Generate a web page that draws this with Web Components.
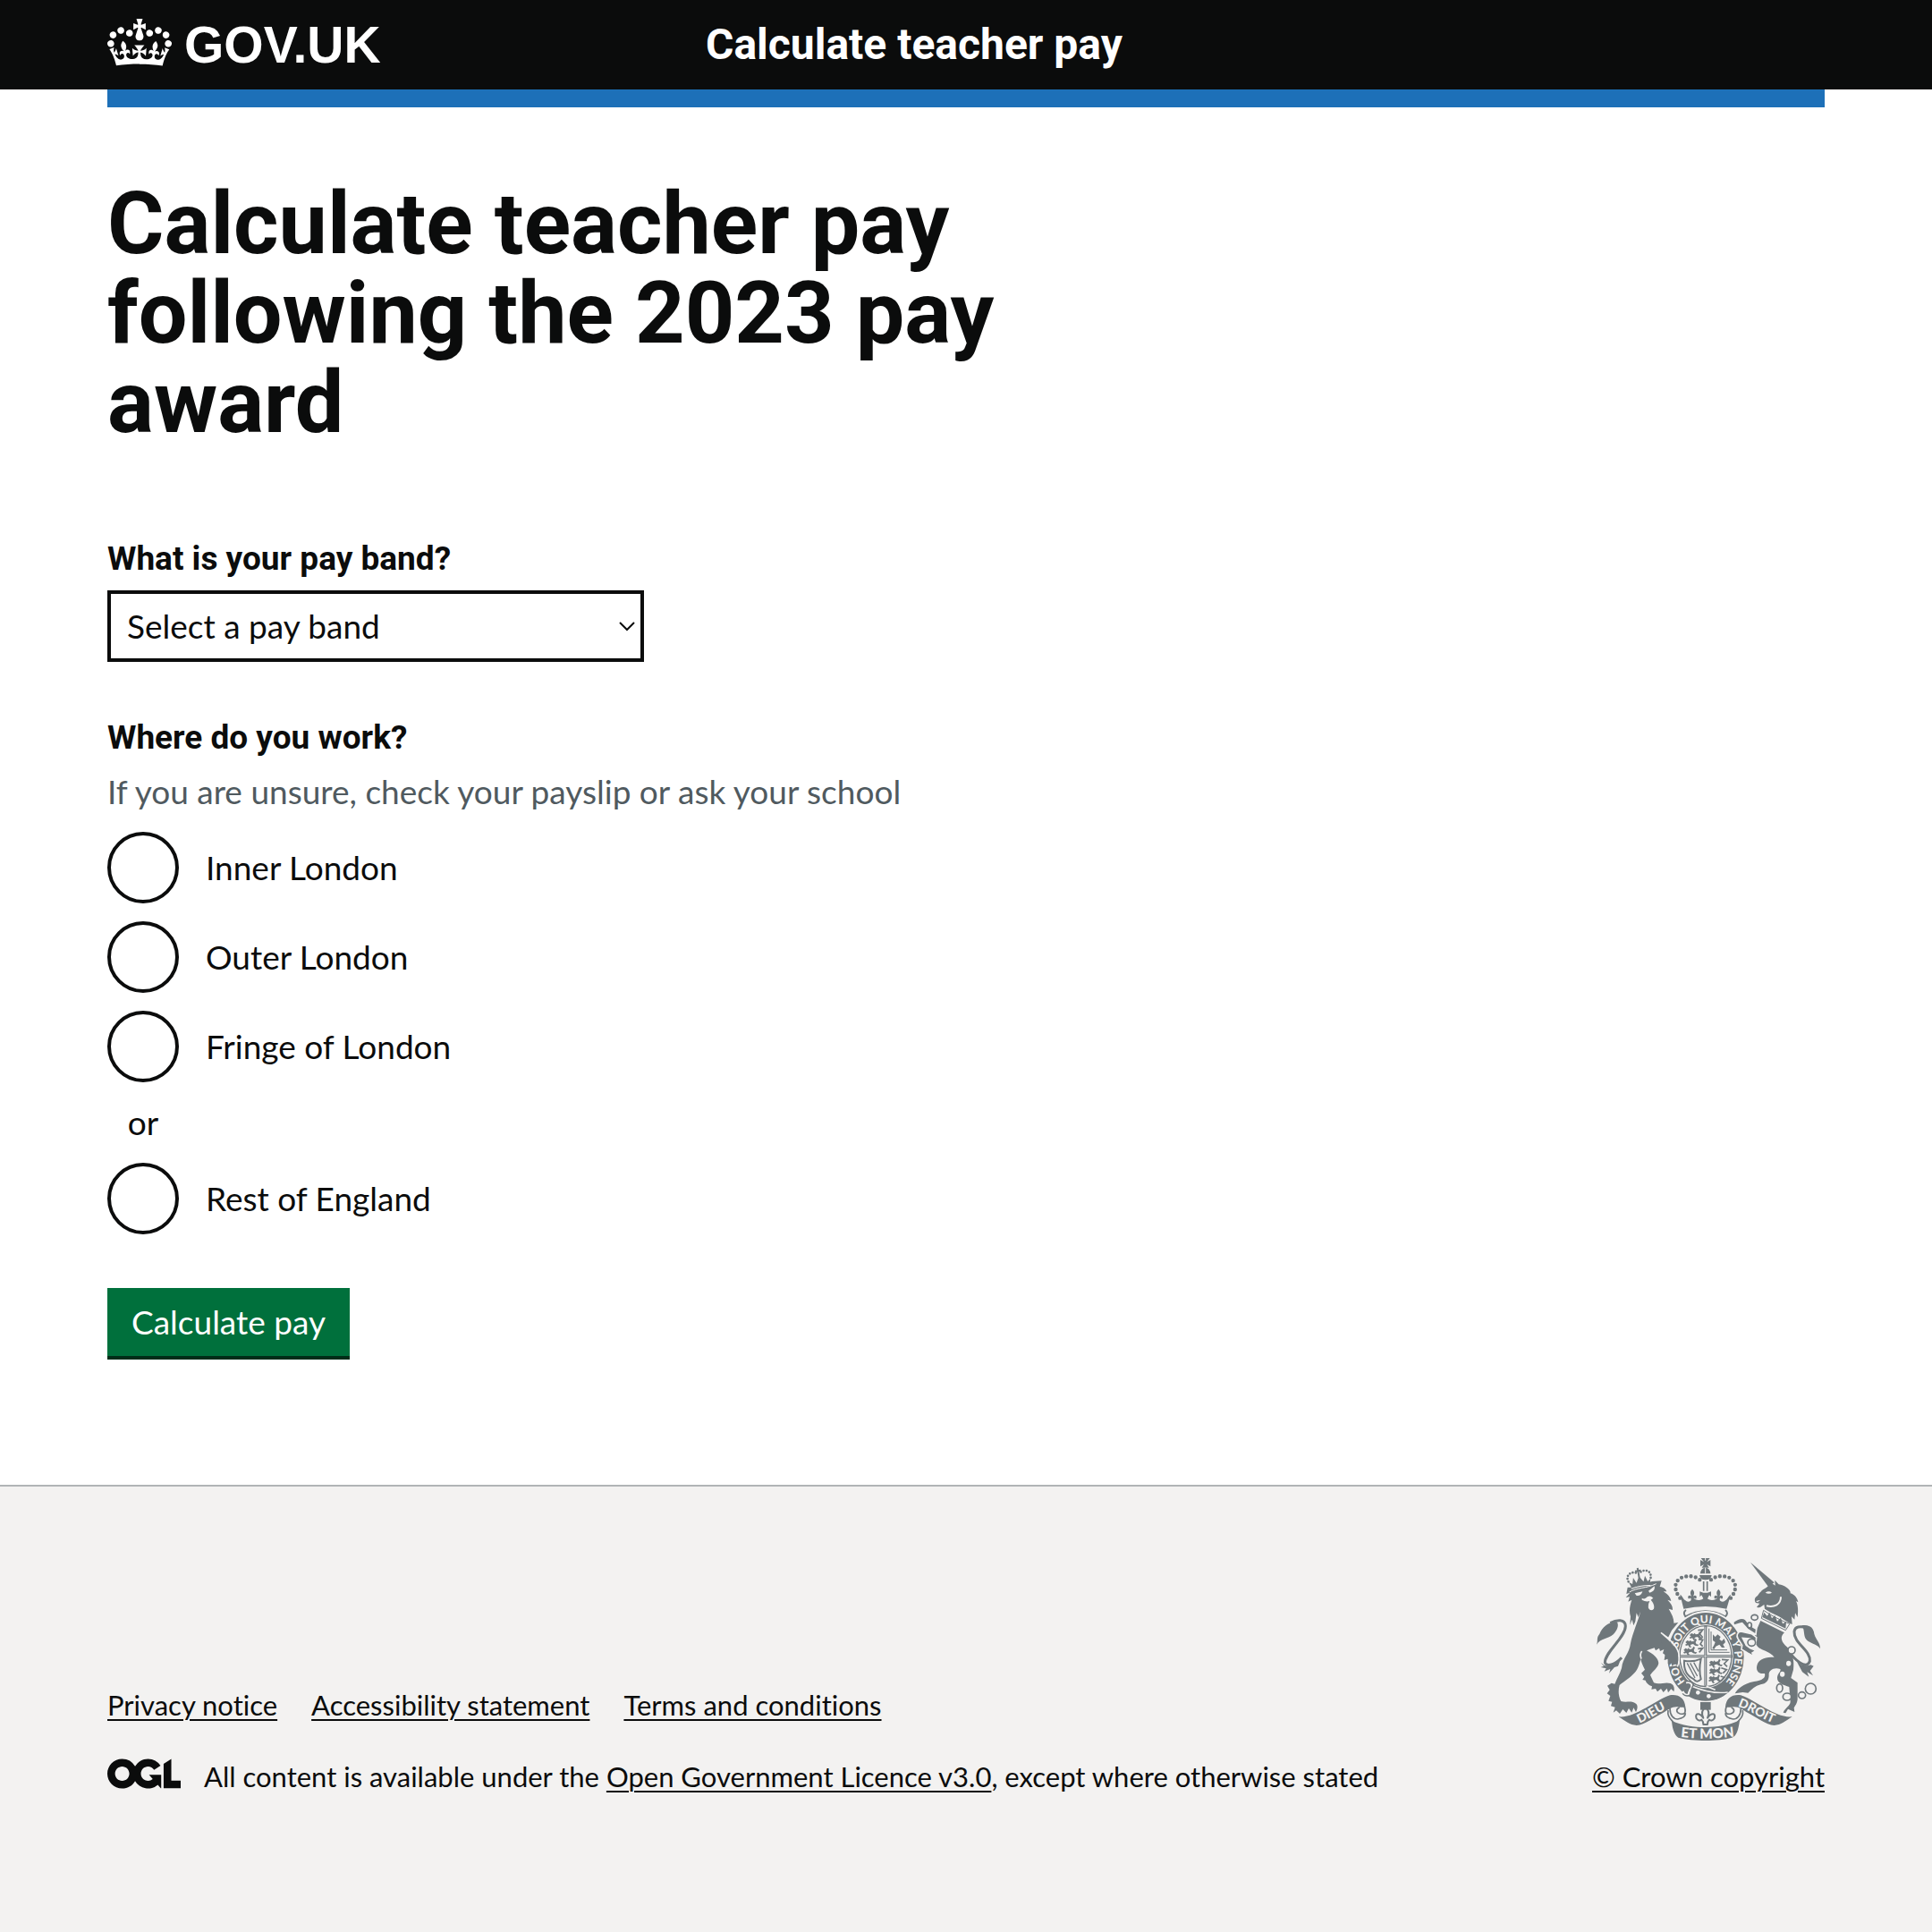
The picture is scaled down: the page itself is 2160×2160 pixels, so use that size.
<!DOCTYPE html>
<html lang="en">
<head>
<meta charset="utf-8">
<meta name="viewport" content="width=device-width, initial-scale=1">
<title>Calculate teacher pay</title>
<style>
  body {
    margin: 0;
    min-height: 100vh;
    display: flex;
    flex-direction: column;
    font: 400 37px/50px Lato, "Liberation Sans", sans-serif;
    font-variant-ligatures: none;
    color: #0b0c0c;
    background: #fff;
    --gutter: 120px;
    --ink: #0b0c0c;
    --strong: Roboto, "Liberation Sans", sans-serif;
  }
</style>
</head>
<body>

<template id="tpl-header">
  <style>
    :host { display: block; color: #fff; }
    .top { background: #0b0c0c; }
    .row { display: flex; align-items: center; height: 100px; margin: 0 var(--gutter); }
    .home { flex: 0 0 calc(100% / 3); display: flex; align-items: center; gap: 14px; color: inherit; text-decoration: none; font: 700 57px/64px "Liberation Sans", sans-serif; }
    .home svg { width: 72px; height: 53px; margin-bottom: 5px; }
    .service { padding-left: 29px; color: inherit; text-decoration: none; font: 700 48px/60px var(--strong); }
    .bar { height: 20px; margin: 0 var(--gutter); background: #1d70b8; }
  </style>
  <header>
    <div class="top">
      <div class="row">
        <a class="home" href="#">
          <svg viewBox="0 0 132 97" aria-hidden="true"><path fill="currentColor" fill-rule="evenodd" d="M25 30.2c3.5 1.5 7.7-.2 9.1-3.7 1.5-3.6-.2-7.8-3.9-9.2-3.6-1.4-7.6.3-9.1 3.9-1.4 3.5.3 7.5 3.9 9zM9 39.5c3.6 1.5 7.8-.2 9.2-3.7 1.5-3.6-.2-7.8-3.9-9.1-3.6-1.5-7.6.2-9.1 3.8-1.4 3.5.3 7.5 3.8 9zM4.4 57.2c3.5 1.5 7.7-.2 9.1-3.8 1.5-3.6-.2-7.7-3.9-9.1-3.5-1.5-7.6.3-9.1 3.8-1.4 3.5.3 7.6 3.9 9.1zm38.3-21.4c3.5 1.5 7.7-.2 9.1-3.8 1.5-3.6-.2-7.7-3.9-9.1-3.6-1.5-7.6.3-9.1 3.8-1.3 3.6.4 7.7 3.9 9.1zm64.4-5.6c-3.6 1.5-7.8-.2-9.1-3.7-1.5-3.6.2-7.8 3.8-9.2 3.6-1.4 7.7.3 9.2 3.9 1.3 3.5-.4 7.5-3.9 9zm15.9 9.3c-3.6 1.5-7.7-.2-9.1-3.7-1.5-3.6.2-7.8 3.7-9.1 3.6-1.5 7.7.2 9.2 3.8 1.5 3.5-.3 7.5-3.8 9zm4.7 17.7c-3.6 1.5-7.8-.2-9.2-3.8-1.5-3.6.2-7.7 3.9-9.1 3.6-1.5 7.7.3 9.2 3.8 1.3 3.5-.4 7.6-3.9 9.1zM89.3 35.8c-3.6 1.5-7.8-.2-9.2-3.8-1.4-3.6.2-7.7 3.9-9.1 3.6-1.5 7.7.3 9.2 3.8 1.4 3.6-.3 7.7-3.9 9.1zM69.7 17.7l8.9 4.7V9.3l-8.9 2.8c-.2-.3-.5-.6-.9-.9L72.4 0H59.6l3.5 11.2c-.3.3-.6.5-.9.9l-8.8-2.8v13.1l8.8-4.7c.3.3.6.7.9.9l-5 15.4v.1c-.2.8-.4 1.6-.4 2.4 0 4.1 3.1 7.5 7 8.1h.2c.3 0 .7.1 1 .1.4 0 .7 0 1-.1h.2c4-.6 7.1-4.1 7.1-8.1 0-.8-.1-1.7-.4-2.4V34l-5.1-15.4c.4-.2.7-.6 1-.9zM66 92.8c16.9 0 32.8 1.1 47.1 3.2 4-16.9 8.9-26.7 14-33.5l-9.6-3.4c1 4.9 1.1 7.2 0 10.2-1.5-1.4-3-4.3-4.2-8.7L108.6 76c2.8-2 5-3.2 7.5-3.3-4.4 9.4-10 11.9-13.6 11.2-4.3-.8-6.3-4.6-5.6-7.9 1-4.7 5.7-5.9 8-.5 4.3-8.7-3-11.4-7.6-8.8 7.1-7.2 7.9-13.5 2.1-21.1-8 6.1-8.1 12.3-4.5 20.8-4.7-5.4-12.1-2.5-9.5 6.2 3.4-5.2 7.9-2 7.2 3.1-.6 4.3-6.4 7.8-13.5 7.2-10.3-.9-10.9-8-11.2-13.8 2.5-.5 7.1 1.8 11 7.3L80.2 60c-4.1 4.4-8 5.3-12.3 5.4 1.4-4.4 8-11.6 8-11.6H55.5s6.4 7.2 7.9 11.6c-4.2-.1-8-1-12.3-5.4l1.4 16c3.9-5.5 8.5-7.7 10.9-7.3-.3 5.8-.9 12.8-11.1 13.8-7.2.6-12.9-2.9-13.5-7.2-.7-5 3.8-8.3 7.1-3.1 2.7-8.7-4.6-11.6-9.4-6.2 3.7-8.5 3.6-14.7-4.6-20.8-5.8 7.6-5 13.9 2.2 21.1-4.7-2.6-11.9.1-7.7 8.8 2.3-5.5 7.1-4.2 8.1.5.7 3.3-1.3 7.1-5.7 7.9-3.5.7-9-1.8-13.5-11.2 2.5.1 4.7 1.3 7.5 3.3l-4.7-15.4c-1.2 4.4-2.7 7.2-4.3 8.7-1.1-3-.9-5.3 0-10.2l-9.5 3.4c5 6.9 9.9 16.7 14 33.5 14.8-2.1 30.8-3.2 47.7-3.2z"/></svg>
          <span>GOV.UK</span>
        </a>
        <a class="service" href="#"><slot></slot></a>
      </div>
    </div>
    <div class="bar"></div>
  </header>
</template>

<template id="tpl-page">
  <style>
    :host { display: block; padding: 80px var(--gutter) 144px; }
    main { max-width: 1260px; }
    h1 { margin: 0 0 100px; font: 700 97px/100px var(--strong); }
    form { display: flex; flex-direction: column; align-items: flex-start; gap: 60px; }
  </style>
  <main>
    <h1><slot name="heading"></slot></h1>
    <form onsubmit="return false"><slot></slot></form>
  </main>
</template>

<template id="tpl-select">
  <style>
    :host { display: block; }
    label { display: block; margin-bottom: 10px; font-family: var(--strong); font-weight: 700; }
    .box { display: inline-grid; align-items: center; vertical-align: top; width: 600px; max-width: 100%; }
    select, svg { grid-area: 1 / 1; }
    select { appearance: none; box-sizing: border-box; width: 100%; height: 80px; margin: 0; padding: 0 50px 0 18px; border: 4px solid var(--ink); border-radius: 0; background: #fff; color: inherit; font: inherit; }
    svg { justify-self: end; width: 18px; height: 12px; margin-right: 10px; pointer-events: none; }
  </style>
  <label for="band"></label>
  <div class="box">
    <select id="band"></select>
    <svg viewBox="0 0 18 12" aria-hidden="true"><path d="M1 2l8 8 8-8" fill="none" stroke="#0b0c0c" stroke-width="2"/></svg>
  </div>
</template>

<template id="tpl-radios">
  <style>
    :host { display: block; }
    fieldset { margin: 0; padding: 0; border: 0; min-width: 0; }
    legend { padding: 0; margin-bottom: 10px; font-family: var(--strong); font-weight: 700; }
    .hint { color: #505a5f; margin-bottom: 20px; }
    .list { display: flex; flex-direction: column; gap: 20px; }
    .item { display: flex; align-items: center; }
    input { appearance: none; box-sizing: border-box; width: 80px; height: 80px; margin: 0; border: 4px solid var(--ink); border-radius: 50%; background: transparent; }
    input:checked { background: radial-gradient(circle, #0b0c0c 20px, transparent 21px); }
    label { padding: 0 30px; }
    .or { width: 80px; text-align: center; }
  </style>
  <fieldset aria-describedby="hint">
    <legend></legend>
    <div class="hint" id="hint"></div>
    <div class="list"></div>
  </fieldset>
</template>

<template id="tpl-button">
  <style>
    :host { display: block; }
    button { height: 76px; margin: 0; padding: 0 27px; border: 0; border-radius: 0; background: #00703c; box-shadow: 0 4px 0 #002d18; color: #fff; font: inherit; }
  </style>
  <button type="submit"><slot></slot></button>
</template>

<template id="tpl-footer">
  <style>
    :host { display: block; flex: 1 0 auto; padding: 80px var(--gutter); border-top: 2px solid #b1b4b6; background: #f3f2f1; font-size: 31px; line-height: 40px; }
    footer { display: flex; align-items: flex-end; justify-content: space-between; gap: 40px; }
    a { color: inherit; text-decoration: underline; text-decoration-thickness: 2px; text-underline-offset: 4px; }
    ul { display: flex; flex-wrap: wrap; gap: 0 38px; margin: 0 0 40px; padding: 0; list-style: none; }
    .licence { display: flex; align-items: flex-start; gap: 26px; }
    .licence svg { width: 82px; height: 34px; }
    .copy { display: flex; flex-direction: column; align-items: center; gap: 20px; }
  </style>
  <footer>
    <div>
      <ul>
        <li><a href="#">Privacy notice</a></li>
        <li><a href="#">Accessibility statement</a></li>
        <li><a href="#">Terms and conditions</a></li>
      </ul>
      <div class="licence">
        <svg viewBox="0 0 483.2 195.7" aria-hidden="true"><path fill="currentColor" d="M421.5 142.8V.1l-50.7 32.3v161.1h112.4v-50.7zm-122.3-9.6A47.12 47.12 0 0 1 221 97.8c0-26 21.1-47.1 47.1-47.1 16.7 0 31.4 8.7 39.7 21.8l42.7-27.2A97.63 97.63 0 0 0 268.1 0c-36.5 0-68.3 20.1-85.1 49.7A98 98 0 0 0 97.8 0C43.9 0 0 43.9 0 97.8s43.9 97.8 97.8 97.8c36.5 0 68.3-20.1 85.1-49.7a97.76 97.76 0 0 0 149.6 25.4l19.4 22.2h3v-87.8h-80l24.3 27.5zM97.8 145c-26 0-47.1-21.1-47.1-47.1s21.1-47.1 47.1-47.1 47.1 21.1 47.1 47.1-21.2 47.1-47.1 47.1"/></svg>
        <span>All content is available under the <a href="#">Open Government Licence v3.0</a>, except where otherwise stated</span>
      </div>
    </div>
    <div class="copy">
      <royal-arms></royal-arms>
      <a href="#">© Crown copyright</a>
    </div>
  </footer>
</template>

<template id="tpl-arms">
  <style>
    :host { display: block; color: #6f777b; --paper: #f3f2f1; }
    svg { display: block; width: 250px; height: 204px; overflow: visible; }
    text { font-family: Lato, "Liberation Sans", sans-serif; font-weight: 900; fill: var(--paper); }
    .p { fill: var(--paper); }
    .ps { fill: none; stroke: var(--paper); }
    .s { fill: none; stroke: currentColor; }
    .halo { stroke: var(--paper); stroke-width: 5; }
  </style>
  <svg viewBox="72 66 750 612" fill="currentColor" aria-hidden="true">
    <defs>
      <path id="ring" d="M372 483 A97 115 0 1 1 504 483"/>
      <path id="dieu" d="M216 620 C252 606 287 576 328 565"/>
      <path id="droit" d="M545 563 C588 576 628 609 678 624"/>
      <path id="mon" d="M354 666 Q437 676 522 666"/>
      <path id="beast" d="M0 8l6-6 8 3 2-4 5 5 8-2 4-8 5 4-4 9 3 6 8 1-4 5-9-2-6-5-8 2-2 5 6 3-8 2-5-8-7 2-3-4 6-3z"/>
      <path id="lily" d="M0 -20c9 9 7 16 3 24 8-6 14 0 10 8l-5 0c0-5-5-2-4 4l-8 0c1-6-4-9-4-4l-5 0c-4-8 2-14 10-8-4-8-6-15 3-24z"/>
    </defs>

    <!-- lion: tail, body, face -->
    <path d="M72 356C78 340 70 334 82 320C90 300 112 278 140 280C148 290 142 308 128 322C110 338 86 334 72 356Z"/>
    <path class="s" stroke-width="9" d="M118 284C140 272 168 270 169 294C168 334 100 380 100 416C106 432 134 424 156 400"/>
    <path d="M86 416L98 426C118 430 140 420 152 408L144 428L132 432L114 452L118 438L98 446L104 436L86 432L96 428Z"/>
    <path d="M186 164L258 144L290 142L284 162C298 164 304 170 307 178L296 178C312 188 320 198 322 210L310 206C322 218 328 228 327 240L314 236C325 255 332 270 331 284L346 282L324 308L312 332L286 314L308 342C325 355 342 370 345 388C347 402 346 414 342 427L334 416L326 430L322 414L311 421L314 404L299 407L306 394L294 385L298 372L285 378L282 368L270 376L266 367L250 372L240 376C262 388 278 400 280 418C278 434 262 444 252 458L264 484C284 492 300 480 320 486C330 490 335 500 331 514L322 505L312 517L308 503L296 516L288 504L276 514L270 504L256 506L258 496C246 492 238 484 236 476L226 474L232 464L222 452L234 440C226 424 221 412 220 404C214 426 210 442 194 456C178 472 160 482 149 492C144 510 145 530 154 546C172 552 190 542 205 555C212 562 208 575 204 582L196 568L190 584L180 570L172 585L160 573L150 588L138 577L128 584L134 566L120 562L124 548L112 545L118 528L107 520L116 508L108 494L122 485L133 488C140 470 150 455 156 435C160 400 182 386 186 352C192 320 212 275 220 244L212 264L206 250L202 278L196 292L191 272L184 290L186 262C180 242 184 225 190 206L178 212L183 196L170 198L184 182L172 186L176 164Z"/>
    <path class="p" d="M200 184L226 178Q222 194 206 192ZM246 176L266 160Q270 176 250 182ZM224 200Q234 206 242 196Q252 190 262 200L254 206Q268 222 264 236Q254 246 246 234Q244 220 250 210Q238 214 224 206Z"/>
    <path class="ps" stroke-width="3" d="M182 180C206 164 240 168 272 152"/>
    <path class="ps" stroke-width="5" d="M222 404Q216 388 224 378"/>

    <!-- lion's crown -->
    <g transform="translate(220 160) rotate(-10)">
      <path d="M-31 0L-37 -20L-26 -12L-20 -32L-12 -13L0 -34L12 -13L20 -32L26 -12L37 -20L31 0Q0 -7 -31 0Z"/>
      <path class="ps" stroke-width="3" d="M-33 3Q0 -4 33 3"/>
      <path class="s" stroke-width="8" stroke-linecap="round" stroke-dasharray="0 10" d="M-38 -22C-46 -48 -18 -56 -4 -44M38 -22C46 -48 18 -56 4 -44"/>
      <path d="M-3 -62h6v7h7v6h-7v20h-6v-20h-7v-6h7z"/>
    </g>

    <!-- unicorn: horn, head, mane -->
    <path d="M588 80L668 148L648 162Z"/>
    <path d="M640 166L660 150L671 158L670 140L683 154C705 158 724 172 722 184C736 188 746 200 748 214L741 210C749 226 748 246 746 264L738 250L736 272L726 262L728 288C708 280 690 262 668 254C655 248 642 240 636 236L634 222C626 226 620 236 609 230L619 218L606 216C599 206 603 197 612 192C618 182 628 172 640 166Z"/>
    <path class="ps" stroke-width="6" d="M690 196C690 222 668 232 642 226"/>
    <path class="p" d="M638 182Q650 174 660 182Q650 188 638 182ZM606 210L622 206L612 214Z"/>
    <!-- unicorn's coronet collar -->
    <path class="p" stroke="currentColor" stroke-width="3" d="M625 268L706 308L720 286C696 278 660 260 632 241Z"/>
    <path d="M628 264L634 248L644 260L652 248L660 268L670 258L678 278L690 266L696 286L708 280L706 302Z"/>
    <!-- unicorn's body and legs -->
    <path d="M622 276L702 316C688 328 690 342 704 358C730 380 736 410 732 440L724 468L746 484L746 540C744 556 738 560 734 568L736 582L714 572L706 586L698 584C704 568 722 560 722 548L718 498C700 492 676 486 678 466C680 450 692 446 688 438C668 430 648 442 650 458C650 478 640 486 622 490C604 495 592 506 580 518L562 516L536 520C546 504 562 488 600 480C628 476 640 468 636 453C612 456 604 440 612 420C620 402 640 398 668 398C652 380 636 378 622 370C606 362 600 345 604 318Z"/>
    <!-- unicorn's tail -->
    <path class="s" stroke-width="9" d="M712 372C736 408 776 442 787 412C792 376 732 352 735 312C738 292 758 296 780 298"/>
    <path d="M760 292C786 288 800 300 802 320C806 338 822 348 822 370C812 354 790 354 776 340C764 326 772 308 760 292Z"/>
    <path d="M744 414C758 426 776 430 790 424L800 428L788 444L798 460L778 448L784 464L762 448Z"/>

    <!-- crown above the shield -->
    <path d="M422 66L452 66L442 79L454 72L454 94L442 87L449 98L425 98L432 87L420 94L420 72L432 79Z"/>
    <path d="M420 118Q422 98 437 98Q452 98 454 118ZM417 123L458 123Q456 140 437 139Q420 140 417 123Z"/>
    <path class="ps" stroke-width="3" d="M437 66V74M437 98V118"/>
    <path class="s" stroke-width="13" stroke-linecap="round" stroke-dasharray="0 16" d="M352 200C330 172 332 144 356 132C378 122 404 126 420 140M522 200C544 172 542 144 518 132C496 122 470 126 454 140"/>
    <path class="s" stroke-width="5" d="M431 144V176M443 144V176"/>
    <path d="M352 188L364 236Q437 220 508 236L522 188C514 192 512 204 504 208C500 214 486 214 484 204L482 196C474 206 456 212 444 202L450 190L456 196V178L444 182H430L418 178V196L424 190L430 202C418 212 400 206 392 196L390 204C388 214 374 214 370 208C362 204 360 192 352 188Z"/>
    <use href="#lily" x="393" y="190"/><use href="#lily" x="481" y="190"/>
    <path class="s" stroke-width="6" d="M372 240Q360 248 370 262Q437 226 504 262Q516 250 504 240"/>

    <!-- garter -->
    <ellipse class="p" cx="438" cy="397" rx="134" ry="154"/>
    <ellipse cx="438" cy="397" rx="128" ry="148"/>
    <ellipse class="p" cx="438" cy="395" rx="92" ry="107"/>
    <ellipse class="s" stroke-width="4" cx="438" cy="395" rx="87" ry="102"/>
    <text font-size="36"><textPath href="#ring" startOffset="4">HONI</textPath></text>
    <text font-size="36"><textPath href="#ring" startOffset="122">SOIT QUI MAL Y</textPath></text>
    <text font-size="36"><textPath href="#ring" startOffset="404">PENSE</textPath></text>
    <!-- quarters -->
    <path d="M433 292h9v202h-9zM348 391h180v9h-180z"/>
    <path class="ps" stroke-width="2" d="M437 296V492M352 395H524"/>
    <use href="#beast" x="384" y="316"/><use href="#beast" x="370" y="340"/><use href="#beast" x="364" y="366"/>
    <path class="s" stroke-width="5" d="M412 308L428 306L418 320L428 332M414 338L428 340L420 354L428 362M412 370L428 368L416 382"/>
    <path class="s" stroke-width="3" d="M449 302V382H518M456 312V374H510"/>
    <path d="M462 322l8 8 8-8 10 8-4 8 8 6 8-8 4 12-8 8 6 10-10 0-8-10-12 6-6 10-6-4 6-10 4-10-8-6z"/>
    <use href="#beast" x="450" y="408"/><use href="#beast" x="450" y="434"/><use href="#beast" x="448" y="460"/>
    <path class="s" stroke-width="5" d="M492 406L512 408L500 420L510 430M490 434L508 440L496 452M488 462L500 466L490 478"/>
    <path class="s" stroke-width="6" d="M366 410Q394 416 422 404Q414 440 422 472Q408 486 398 472C372 460 364 436 366 410Z"/>
    <path class="s" stroke-width="4" d="M376 418L402 468M386 418L410 462M398 416L414 446"/>
    <!-- buckle and strap -->
    <path class="ps" stroke-width="5" d="M388 494C430 512 470 522 512 516M440 496L470 508"/>
    <path d="M384 500C430 514 470 524 510 518C480 548 420 552 378 520Z"/>
    <circle class="p" cx="412" cy="517" r="7"/><circle class="p" cx="448" cy="529" r="7"/>
    <path class="ps" stroke-width="6" d="M372 484Q392 480 392 498Q382 508 380 524Q366 526 362 512"/>
    <path class="s" stroke-width="4" d="M364 482Q386 472 398 490Q386 508 388 524Q372 534 360 520"/>

    <!-- lion's forepaw resting on the garter -->
    <path class="ps" stroke-width="5" d="M288 316C318 336 344 364 348 388C350 404 349 416 343 430"/>
    <path d="M290 322C322 346 341 370 344 388C347 402 346 414 342 427L334 416L326 430L321 414L311 421L312 404L299 407L304 372L286 340Z"/>
    <!-- unicorn's forelegs -->
    <path class="halo" d="M608 304L588 292L572 272C560 262 546 268 530 280L532 292L552 286L560 284L578 304L606 322Z"/>
    <path class="halo" d="M608 332L592 320L556 312C544 314 540 326 546 336L560 358L558 372L578 384L600 396L594 384L606 376L588 368L574 358L562 334L588 336L606 350Z"/>
    <!-- chain -->
    <g class="s" stroke-width="5">
      <ellipse class="p" cx="602" cy="265" rx="11" ry="9"/><ellipse class="p" cx="585" cy="291" rx="7" ry="9"/><ellipse class="p" cx="592" cy="349" rx="13" ry="12"/><ellipse class="p" cx="726" cy="375" rx="12" ry="12"/>
      <ellipse cx="686" cy="502" rx="10" ry="14"/><ellipse class="p" cx="711" cy="531" rx="14" ry="12"/><ellipse cx="761" cy="526" rx="12" ry="11"/><circle cx="790" cy="504" r="18"/>
    </g>
    <ellipse class="p" cx="716" cy="419" rx="8" ry="9"/><ellipse class="p" cx="695" cy="455" rx="8" ry="9"/>

    <!-- motto ribbon -->
    <path d="M420 549h35v26h-35z"/>
    <path class="s" stroke-width="6" stroke-linejoin="round" d="M437 564C452 578 450 590 444 602C456 584 474 584 467 604C462 612 454 612 450 608C444 614 443 618 444 624H430C431 618 430 614 424 608C420 612 412 612 407 604C400 584 418 584 430 602C424 590 422 578 437 564Z"/>
    <path d="M146 598C200 604 262 546 318 526C348 522 368 536 370 566L350 566C330 560 312 574 296 584C266 600 234 624 206 627C184 626 168 612 146 598Z"/>
    <path d="M728 598C674 604 612 546 556 526C526 522 506 536 504 566L524 566C544 560 562 574 578 584C608 600 640 624 668 627C690 626 706 612 728 598Z"/>
    <path class="s" stroke-width="5" d="M312 576C308 598 322 606 332 620M350 566C336 574 340 584 352 588C372 592 372 578 366 562M318 570C318 594 330 606 344 606C360 604 370 600 370 586M562 576C566 598 552 606 542 620M524 566C538 574 534 584 522 588C502 592 502 578 508 562M556 570C556 594 544 606 530 606C514 604 504 600 504 586"/>
    <path d="M324 612C360 628 400 633 437 633C476 633 514 628 552 610C548 640 542 664 526 668C480 681 396 681 346 668C334 660 326 640 324 612Z"/>
    <text font-size="42"><textPath href="#dieu">DIEU</textPath></text>
    <text font-size="42"><textPath href="#droit">DROIT</textPath></text>
    <text font-size="46"><textPath href="#mon">ET MON</textPath></text>
  </svg>
</template>

<script>
  const stamp = (host, id) => {
    const root = host.attachShadow({ mode: 'open' });
    root.append(document.getElementById(id).content.cloneNode(true));
    return root;
  };
  const simple = (name, id) => customElements.define(name, class extends HTMLElement {
    constructor() { super(); stamp(this, id); }
  });

  simple('royal-arms', 'tpl-arms');
  simple('site-header', 'tpl-header');
  simple('site-footer', 'tpl-footer');
  simple('form-page', 'tpl-page');
  simple('submit-button', 'tpl-button');

  customElements.define('select-field', class extends HTMLElement {
    connectedCallback() {
      if (this.shadowRoot) return;
      const root = stamp(this, 'tpl-select');
      root.querySelector('label').textContent = this.getAttribute('label');
      root.querySelector('select').add(new Option(this.getAttribute('placeholder'), ''));
    }
  });

  customElements.define('radio-group', class extends HTMLElement {
    connectedCallback() {
      if (this.shadowRoot) return;
      const root = stamp(this, 'tpl-radios');
      root.querySelector('legend').textContent = this.getAttribute('label');
      root.querySelector('.hint').textContent = this.getAttribute('hint');
      const list = root.querySelector('.list');
      this.getAttribute('options').split('|').forEach((name, i) => {
        const row = document.createElement('div');
        if (name === 'or') {
          row.className = 'or';
          row.textContent = name;
        } else {
          row.className = 'item';
          row.innerHTML = `<input type="radio" name="area" id="area-${i}"><label for="area-${i}">${name}</label>`;
        }
        list.append(row);
      });
    }
  });
</script>

<site-header>Calculate teacher pay</site-header>
<form-page>
  <span slot="heading">Calculate teacher pay following the 2023 pay award</span>
  <select-field label="What is your pay band?" placeholder="Select a pay band"></select-field>
  <radio-group label="Where do you work?" hint="If you are unsure, check your payslip or ask your school" options="Inner London|Outer London|Fringe of London|or|Rest of England"></radio-group>
  <submit-button>Calculate pay</submit-button>
</form-page>
<site-footer></site-footer>
</body>
</html>
